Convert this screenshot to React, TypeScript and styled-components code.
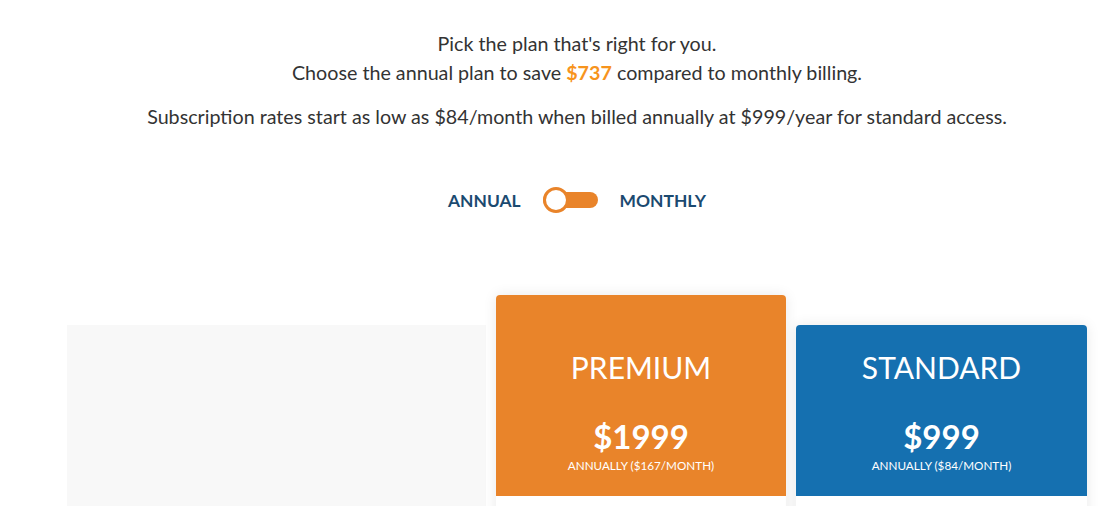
import React from "react";
import { styled, createGlobalStyle } from "styled-components";

const GlobalStyle = createGlobalStyle`
  body {
    margin: 0;
    background: #fff;
    font-family: Lato, "Open Sans", sans-serif;
    overflow: hidden;
  }
`;

type Plan = {
  name: string;
  price: string;
  note: string;
  color: string;
  featured?: boolean;
};

const plans: Plan[] = [
  { name: "PREMIUM", price: "$1999", note: "ANNUALLY ($167/MONTH)", color: "#e9842a", featured: true },
  { name: "STANDARD", price: "$999", note: "ANNUALLY ($84/MONTH)", color: "#1570b0" },
];

const App = () => {
  return (
    <>
      <GlobalStyle />
      <St.Page>
        <St.Intro>
          Pick the plan that's right for you.
          <br />
          Choose the annual plan to save <St.Save>$737</St.Save> compared to monthly billing.
        </St.Intro>
        <St.Note>
          Subscription rates start as low as $84/month when billed annually at $999/year for standard access.
        </St.Note>
        <St.ToggleRow>
          <St.ToggleLabel>ANNUAL</St.ToggleLabel>
          <St.Switch>
            <St.Knob />
          </St.Switch>
          <St.ToggleLabel>MONTHLY</St.ToggleLabel>
        </St.ToggleRow>
        <St.Plans>
          <St.Features />
          {plans.map((p) => (
            <St.Card key={p.name} $featured={p.featured}>
              <St.Header $color={p.color} $featured={p.featured}>
                <St.PlanName>{p.name}</St.PlanName>
                <St.Price>{p.price}</St.Price>
                <St.Billing>{p.note}</St.Billing>
              </St.Header>
              <St.Body />
            </St.Card>
          ))}
        </St.Plans>
      </St.Page>
    </>
  );
};

export default App;

const St = {
  Page: styled.div`
    width: 1020px;
    margin-left: 67px;
    padding-top: 29px;
    text-align: center;
    color: #333;
  `,
  Intro: styled.p`
    margin: 0;
    font-size: 19.7px;
    line-height: 29px;
  `,
  Save: styled.span`
    color: #f7941d;
    font-weight: 700;
  `,
  Note: styled.p`
    margin: 15px 0 0;
    font-size: 19.7px;
    line-height: 29px;
  `,
  ToggleRow: styled.div`
    display: flex;
    justify-content: center;
    align-items: center;
    gap: 22px;
    margin-top: 56px;
    height: 26px;
  `,
  ToggleLabel: styled.span`
    color: #1b4a70;
    font-size: 17.4px;
    font-weight: 700;
  `,
  Switch: styled.div`
    position: relative;
    width: 55px;
    height: 16px;
    border-radius: 8px;
    background: #e9842a;
  `,
  Knob: styled.div`
    position: absolute;
    left: 0;
    top: -5px;
    width: 20px;
    height: 20px;
    border-radius: 50%;
    border: 3px solid #e9842a;
    background: #fff;
  `,
  Plans: styled.div`
    display: grid;
    grid-template-columns: 419px 290px 291px;
    gap: 10px;
    align-items: start;
    margin-top: 82px;
  `,
  Features: styled.div`
    margin-top: 30px;
    height: 300px;
    background: #f8f8f8;
  `,
  Card: styled.div<{ $featured?: boolean }>`
    margin-top: ${(p) => (p.$featured ? "0" : "30px")};
    border-radius: 4px 4px 0 0;
    background: #fff;
    box-shadow: 0 0 14px rgba(0, 0, 0, 0.09);
    overflow: hidden;
  `,
  Header: styled.div<{ $color: string; $featured?: boolean }>`
    display: flex;
    flex-direction: column;
    align-items: center;
    padding: ${(p) => (p.$featured ? "54px" : "24px")} 0 24px;
    background: ${(p) => p.$color};
    color: #fff;
  `,
  PlanName: styled.div`
    font-size: 30px;
    line-height: 36px;
    font-weight: 400;
  `,
  Price: styled.div`
    margin-top: 31px;
    font-size: 33px;
    line-height: 40px;
    font-weight: 700;
  `,
  Billing: styled.div`
    margin-top: 2px;
    font-size: 11.7px;
    line-height: 14px;
  `,
  Body: styled.div`
    height: 200px;
  `,
};
